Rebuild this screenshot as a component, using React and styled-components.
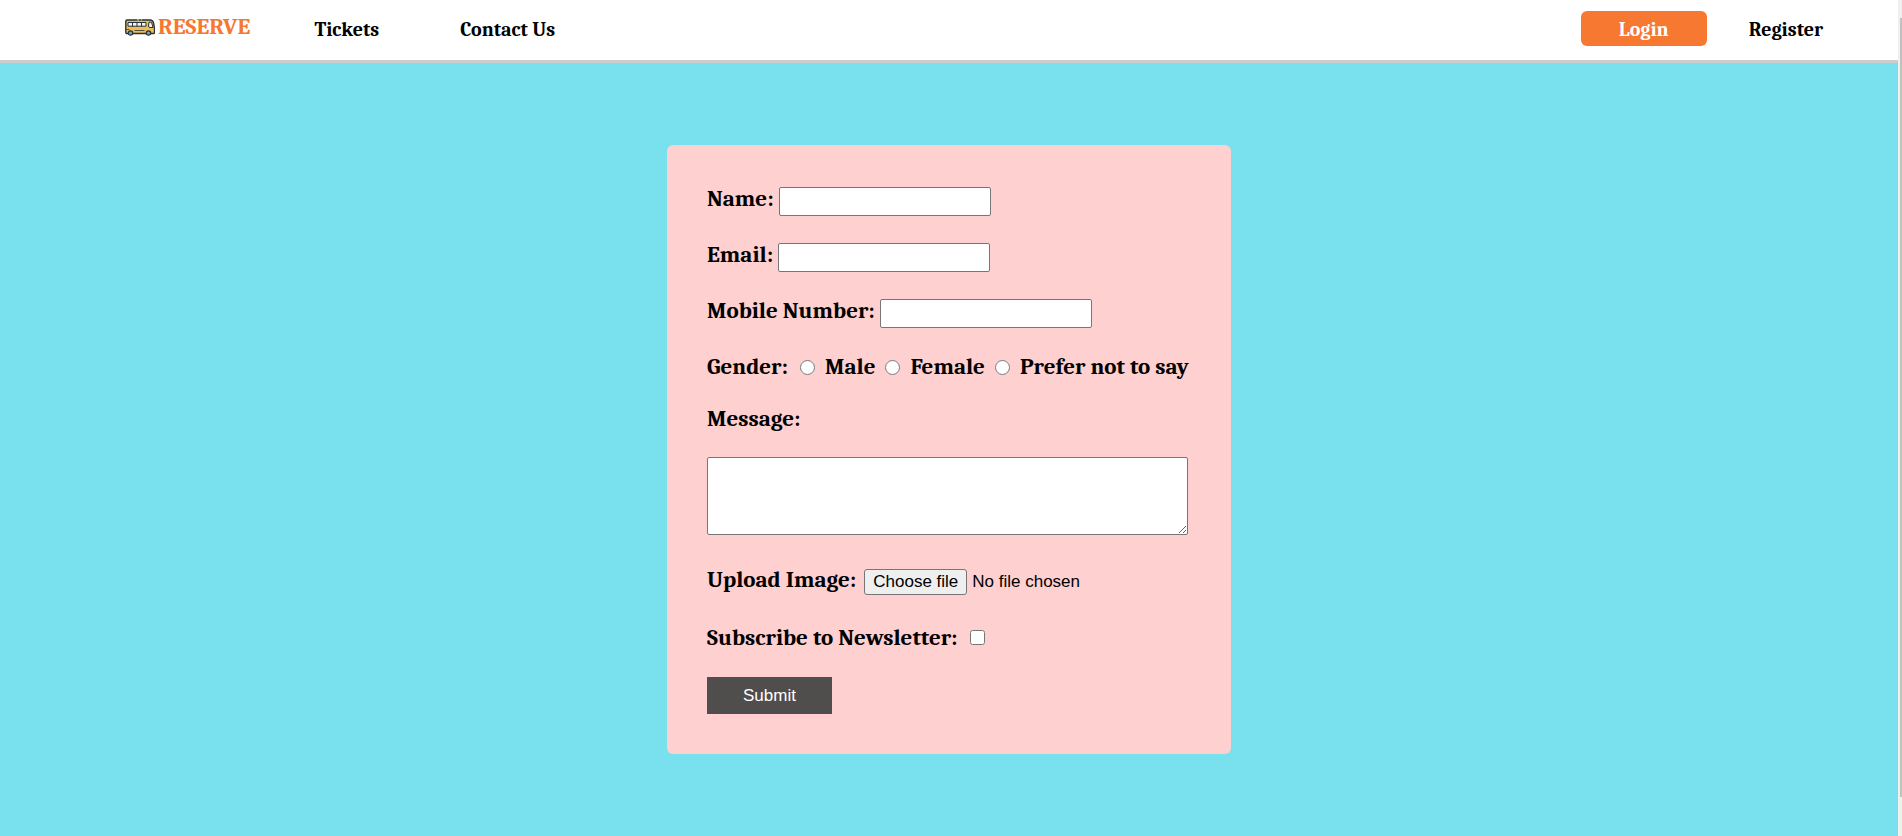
import React, { useState } from "react";
import styled, { createGlobalStyle } from "styled-components";

const GlobalStyle = createGlobalStyle`
  * { box-sizing: border-box; }
  body {
    margin: 0;
    font-family: Cambria, "Liberation Serif", serif;
    font-weight: 700;
    color: #000;
  }
`;

const Shell = styled.div`
  display: flex;
  min-height: 100vh;
`;

const Page = styled.div`
  flex: 1;
  display: flex;
  flex-direction: column;
`;

const ScrollTrack = styled.div`
  display: flex;
  width: 4px;
  padding: 18px 0 39px 2px;
  background: #f0f0f0;
`;

const ScrollThumb = styled.div`
  flex: 1;
  background: #c1c1c1;
`;

const Header = styled.header`
  display: flex;
  align-items: center;
  justify-content: space-between;
  height: 63px;
  padding: 0 75px 4px 125px;
  background: #fff;
  border-bottom: 3px solid #ccc;
`;

const NavGroup = styled.nav`
  display: flex;
  align-items: center;
  gap: ${(p) => p.$gap}px;
`;

const Brand = styled.a`
  display: flex;
  align-items: center;
  gap: 3px;
  margin-right: 64px;
  padding-bottom: 2px;
  font-size: 23px;
  line-height: 24px;
  color: #f67831;
  text-decoration: none;
`;

const NavLink = styled.a`
  padding-top: 4px;
  font-size: 20px;
  line-height: 24px;
  color: #000;
  text-decoration: none;
`;

const LoginButton = styled.button`
  width: 126px;
  height: 35px;
  padding: 2px 0 0;
  border: 0;
  border-radius: 6px;
  background: #f67831;
  color: #fff;
  font: inherit;
  font-size: 20px;
`;

const Main = styled.main`
  flex: 1;
  display: flex;
  align-items: center;
  justify-content: center;
  background: #79e1ed;
`;

const Card = styled.form`
  display: flex;
  flex-direction: column;
  gap: 24px;
  width: 100%;
  max-width: 564px;
  padding: 40px;
  border-radius: 6px;
  background: #fed0cf;
`;

const Row = styled.div`
  display: flex;
  align-items: center;
  gap: ${(p) => p.$gap || 5}px;
  height: ${(p) => p.$height || 32}px;
`;

const Label = styled.label`
  padding-bottom: ${(p) => (p.$raised ? 4 : 0)}px;
  font-size: 23px;
  line-height: 28px;
  white-space: nowrap;
`;

const TextInput = styled.input`
  width: 212px;
  height: 29px;
  border: 1px solid #767676;
  border-radius: 2px;
  background: #fff;
  font: 16px "Liberation Sans", sans-serif;
`;

const Choice = styled.input`
  width: 15px;
  height: 15px;
  margin: 0;
`;

const Options = styled.div`
  display: flex;
  align-items: center;
  gap: 10px;
`;

const Message = styled.textarea`
  width: 481px;
  max-width: 100%;
  height: 78px;
  margin-bottom: 7px;
  border: 1px solid #767676;
  border-radius: 2px;
  background: #fff;
`;

const FilePicker = styled.div`
  position: relative;
  display: flex;
  align-items: center;
  gap: 5px;
  font: 17px "Liberation Sans", sans-serif;
  white-space: nowrap;
`;

const FileInput = styled.input`
  position: absolute;
  inset: 0;
  width: 100%;
  opacity: 0;
`;

const FileButton = styled.span`
  height: 26px;
  padding: 0 8px;
  border: 1px solid #767676;
  border-radius: 3px;
  background: #efefef;
  line-height: 24px;
`;

const Submit = styled.button`
  align-self: flex-start;
  width: 125px;
  height: 37px;
  border: 0;
  background: #504d4d;
  color: #fff;
  font: 17px "Liberation Sans", sans-serif;
`;

const BusSvg = styled.svg`
  flex-shrink: 0;
`;

const BusIcon = () => (
  <BusSvg width="30" height="17" viewBox="0 0 30 17" aria-hidden="true">
    <path d="M2 1h23q3 0 3.500 3l1 5v4.500q0 1-1 1H2q-1.200 0-1.200-1.200V2.200Q.8 1 2 1z" fill="#efbd58" stroke="#27323b" strokeWidth="1.400" />
    <path d="M12 .8h2M16 .8h1" stroke="#efbd58" strokeWidth="1.200" />
    <path d="M3 3.500h18v3.700H3z" fill="#f4f3f5" stroke="#27323b" strokeWidth="1" />
    <path d="M7.500 3.500v4M12 3.500v4M16.500 3.500v4" stroke="#27323b" strokeWidth="1" />
    <path d="M24 3.200h2.500l1.500 5.300h-3q-1.500 0-1.500-1.500z" fill="#f4f3f5" stroke="#27323b" strokeWidth="1" />
    <path d="M1.500 10.500h3M9.500 11.500h10" stroke="#27323b" strokeWidth=".8" />
    <circle cx="5.500" cy="14" r="2.200" fill="#7da3b5" stroke="#27323b" strokeWidth="1.200" />
    <circle cx="23.500" cy="14" r="2.200" fill="#7da3b5" stroke="#27323b" strokeWidth="1.200" />
  </BusSvg>
);

const textFields = [
  { id: "name", label: "Name:", type: "text" },
  { id: "email", label: "Email:", type: "email" },
  { id: "mobile", label: "Mobile Number:", type: "tel" },
];

const genders = ["Male", "Female", "Prefer not to say"];

export default function App() {
  const [fileName, setFileName] = useState("");

  return (
    <Shell>
      <GlobalStyle />
      <Page>
        <Header>
          <NavGroup $gap={0}>
            <Brand href="#">
              <BusIcon />
              RESERVE
            </Brand>
            <NavGroup as="div" $gap={81}>
              <NavLink href="#tickets">Tickets</NavLink>
              <NavLink href="#contact">Contact Us</NavLink>
            </NavGroup>
          </NavGroup>
          <NavGroup $gap={42}>
            <LoginButton type="button">Login</LoginButton>
            <NavLink href="#register">Register</NavLink>
          </NavGroup>
        </Header>
        <Main>
          <Card onSubmit={(e) => e.preventDefault()}>
            {textFields.map((f) => (
              <Row key={f.id}>
                <Label $raised htmlFor={f.id}>{f.label}</Label>
                <TextInput id={f.id} type={f.type} />
              </Row>
            ))}
            <Row $height={28} $gap={12} role="radiogroup" aria-labelledby="gender">
              <Label as="span" id="gender">Gender:</Label>
              <Options>
                {genders.map((g) => (
                  <React.Fragment key={g}>
                    <Choice type="radio" name="gender" id={g} value={g} />
                    <Label htmlFor={g}>{g}</Label>
                  </React.Fragment>
                ))}
              </Options>
            </Row>
            <Row $height={28}>
              <Label htmlFor="message">Message:</Label>
            </Row>
            <Message id="message" />
            <Row $gap={8}>
              <Label $raised htmlFor="upload">Upload Image:</Label>
              <FilePicker>
                <FileButton>Choose file</FileButton>
                <span>{fileName || "No file chosen"}</span>
                <FileInput
                  id="upload"
                  type="file"
                  onChange={(e) => setFileName(e.target.files[0]?.name || "")}
                />
              </FilePicker>
            </Row>
            <Row $height={31} $gap={12}>
              <Label htmlFor="news">Subscribe to Newsletter:</Label>
              <Choice id="news" type="checkbox" />
            </Row>
            <Submit type="submit">Submit</Submit>
          </Card>
        </Main>
      </Page>
      <ScrollTrack aria-hidden="true">
        <ScrollThumb />
      </ScrollTrack>
    </Shell>
  );
}
